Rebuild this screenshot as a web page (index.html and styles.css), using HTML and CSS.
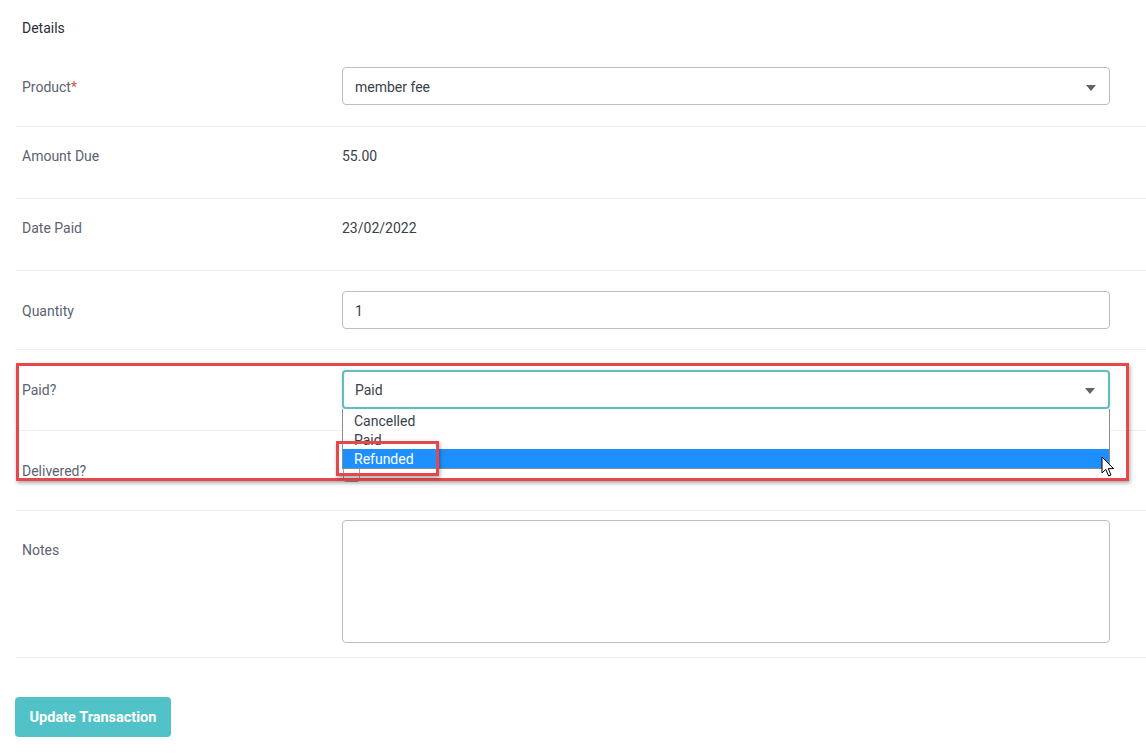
FILE: index.html
```html
<!DOCTYPE html>
<html>
<head>
<meta charset="utf-8">
<link rel="stylesheet" href="styles.css">
</head>
<body>
<div class="page">
  <form class="form">
    <div class="section-title">Details</div>

    <div class="row row-input row-product">
      <div class="label">Product<span class="req">*</span></div>
      <div class="field">
        <div class="select"><span>member fee</span><span class="caret"></span></div>
      </div>
    </div>

    <div class="row row-text">
      <div class="label label-text">Amount Due</div>
      <div class="value">55.00</div>
    </div>

    <div class="row row-text">
      <div class="label label-text">Date Paid</div>
      <div class="value">23/02/2022</div>
    </div>

    <div class="row row-input">
      <div class="label">Quantity</div>
      <div class="field">
        <div class="input">1</div>
      </div>
    </div>

    <div class="row row-input row-paid">
      <div class="label">Paid?</div>
      <div class="field">
        <div class="select select-focus"><span>Paid</span><span class="caret"></span></div>
        <div class="dropdown">
          <div class="option">Cancelled</div>
          <div class="option">Paid</div>
          <div class="option option-active">Refunded</div>
        </div>
      </div>
    </div>

    <div class="row row-input row-delivered">
      <div class="label">Delivered?</div>
      <div class="field">
        <div class="checkbox"></div>
      </div>
    </div>

    <div class="row row-notes">
      <div class="label label-notes">Notes</div>
      <div class="field">
        <div class="textarea"></div>
      </div>
    </div>

    <div class="actions">
      <button type="button" class="btn">Update Transaction</button>
    </div>
  </form>

  <div class="annot annot-big"></div>
  <div class="annot annot-small"></div>
  <svg class="cursor" width="14" height="22" viewBox="0 0 14 22">
    <path d="M1 1 L1 17 L4.8 13.4 L7.6 20 L10 19 L7.3 12.6 L12.5 12.6 Z" fill="#fff" stroke="#000" stroke-width="1" stroke-linejoin="round"/>
  </svg>
</div>
</body>
</html>
```

FILE: styles.css
```css
* { box-sizing: border-box; }
html, body { margin: 0; padding: 0; background: #fff; }
body {
  font-family: Roboto, "Liberation Sans", sans-serif;
  font-size: 14px;
  color: #5b6272;
}
.page { position: relative; width: 1146px; height: 753px; overflow: hidden; }
.form { padding-left: 15px; }
.section-title {
  height: 47px;
  padding: 19px 0 0 7px;
  line-height: 18px;
  color: #2a2e37;
  font-weight: 400;
}
.row {
  display: grid;
  grid-template-columns: 327px 768px;
  border-bottom: 1px solid #eef0f2;
}
.row-input { padding: 20px 0 20px; }
.row-product { padding-bottom: 21px; }
.row-paid { padding-bottom: 21px; }
.row-delivered .field { min-height: 39px; }
.row-text { padding: 20px 0 20px; }
.row-notes { padding: 9px 0 14px; }
.label {
  padding-left: 7px;
  padding-top: 11px;
  line-height: 18px;
}
.label-text { padding-top: 0; min-height: 31px; }
.label-notes { padding-top: 21px; }
.req { color: #d9534f; }
.value { line-height: 18px; color: #3a3f4a; }
.field { position: relative; }
.select, .input {
  height: 38px;
  border: 1px solid #b7bec6;
  border-radius: 4px;
  display: flex;
  align-items: center;
  justify-content: space-between;
  padding: 1px 13px 0 12px;
  color: #3a3f4a;
  background: #fff;
}
.select-focus {
  height: 39px;
  border: 2px solid #62bdc0;
  padding-left: 11px;
  box-shadow: 0 0 3px rgba(98, 189, 192, 0.35);
}
.caret {
  width: 0; height: 0;
  border-left: 5px solid transparent;
  border-right: 5px solid transparent;
  border-top: 6px solid #5d6470;
  margin-top: 2px;
}
.dropdown {
  position: absolute;
  left: 0; top: 39px;
  width: 768px;
  background: #fff;
  border: 1px solid #8c8c8c;
  border-top: none;
  z-index: 2;
  padding-top: 2px;
}
.option {
  height: 19px;
  line-height: 21px;
  padding-left: 11px;
  color: #3a3f4a;
  font-size: 14px;
}
.option-active { background: #1e8fff; color: #fff; }
.checkbox {
  width: 17px; height: 18px;
  margin: 13px 0 0 1px;
  border: 1px solid #9aa1a9;
  border-radius: 3px;
}
.textarea {
  height: 123px;
  border: 1px solid #b7bec6;
  border-radius: 4px;
}
.actions { padding-top: 39px; }
.btn {
  font-family: Roboto, "Liberation Sans", sans-serif;
  width: 156px; height: 40px;
  background: #51c3c8;
  color: #fff;
  font-weight: 700;
  font-size: 14.5px;
  border: none;
  border-radius: 4px;
  padding: 0;
}
.annot {
  position: absolute;
  border: 3px solid #e5484b;
  box-shadow: 1px 2px 4px rgba(0, 0, 0, 0.35);
  z-index: 3;
}
.annot-big { left: 16px; top: 363px; width: 1113px; height: 118px; }
.annot-small { left: 336px; top: 441px; width: 103px; height: 35px; }
.cursor { position: absolute; left: 1101px; top: 456px; z-index: 4; }
```
